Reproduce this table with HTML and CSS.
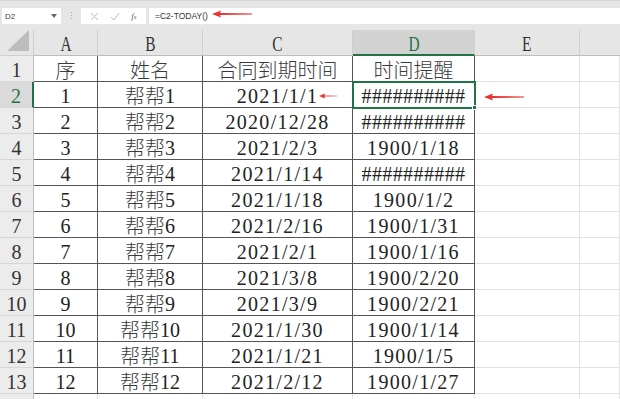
FILE: index.html
```html
<!DOCTYPE html>
<html lang="zh-CN">
<head>
<meta charset="utf-8">
<title>Sheet</title>
<link rel="stylesheet" href="styles.css">
</head>
<body>
<div class="app">
  <div class="toolbar">
    <div class="namebox"><span class="name">D2</span><svg class="dd" width="6" height="4" viewBox="0 0 6 4"><path d="M0 0h6L3 4z" fill="#666"/></svg></div>
    <div class="dots"><i></i><i></i><i></i></div>
    <div class="fxbox">
      <svg width="9" height="9" viewBox="0 0 9 9"><path d="M1 1l7 7M8 1l-7 7" stroke="#bbb" stroke-width="1" fill="none"/></svg>
      <svg width="10" height="9" viewBox="0 0 10 9"><path d="M1 5l3 3 5-7" stroke="#bbb" stroke-width="1" fill="none"/></svg>
      <span class="fx">f<small>x</small></span>
    </div>
    <div class="formula"><span class="ftext">=C2-TODAY()</span></div>
  </div>
  <div class="sheet">
    <div class="h corner"><svg width="24" height="22" viewBox="0 0 24 22"><path d="M22 0V21H0z" fill="#bdbdbd"/></svg></div>
    <div class="h col"><span class="hl">A</span></div>
    <div class="h col"><span class="hl">B</span></div>
    <div class="h col"><span class="hl">C</span></div>
    <div class="h col sel"><span class="hl">D</span></div>
    <div class="h col"><span class="hl">E</span></div>
    <div class="h col last"></div>

    <div class="h row">1</div><div class="c t cjc">序</div><div class="c t cjc">姓名</div><div class="c t cjc">合同到期时间</div><div class="c t cjc">时间提醒</div><div class="c g"></div><div class="c g"></div>
    <div class="h row rsel">2</div><div class="c t">1</div><div class="c t"><span class="cj">帮帮</span>1</div><div class="c t d">2021/1/1</div><div class="c t active hash">##########<span class="handle"></span></div><div class="c g"></div><div class="c g"></div>
    <div class="h row">3</div><div class="c t">2</div><div class="c t"><span class="cj">帮帮</span>2</div><div class="c t d">2020/12/28</div><div class="c t hash">##########</div><div class="c g"></div><div class="c g"></div>
    <div class="h row">4</div><div class="c t">3</div><div class="c t"><span class="cj">帮帮</span>3</div><div class="c t d">2021/2/3</div><div class="c t d">1900/1/18</div><div class="c g"></div><div class="c g"></div>
    <div class="h row">5</div><div class="c t">4</div><div class="c t"><span class="cj">帮帮</span>4</div><div class="c t d">2021/1/14</div><div class="c t hash">##########</div><div class="c g"></div><div class="c g"></div>
    <div class="h row">6</div><div class="c t">5</div><div class="c t"><span class="cj">帮帮</span>5</div><div class="c t d">2021/1/18</div><div class="c t d">1900/1/2</div><div class="c g"></div><div class="c g"></div>
    <div class="h row">7</div><div class="c t">6</div><div class="c t"><span class="cj">帮帮</span>6</div><div class="c t d">2021/2/16</div><div class="c t d">1900/1/31</div><div class="c g"></div><div class="c g"></div>
    <div class="h row">8</div><div class="c t">7</div><div class="c t"><span class="cj">帮帮</span>7</div><div class="c t d">2021/2/1</div><div class="c t d">1900/1/16</div><div class="c g"></div><div class="c g"></div>
    <div class="h row">9</div><div class="c t">8</div><div class="c t"><span class="cj">帮帮</span>8</div><div class="c t d">2021/3/8</div><div class="c t d">1900/2/20</div><div class="c g"></div><div class="c g"></div>
    <div class="h row">10</div><div class="c t">9</div><div class="c t"><span class="cj">帮帮</span>9</div><div class="c t d">2021/3/9</div><div class="c t d">1900/2/21</div><div class="c g"></div><div class="c g"></div>
    <div class="h row">11</div><div class="c t">10</div><div class="c t"><span class="cj">帮帮</span>10</div><div class="c t d">2021/1/30</div><div class="c t d">1900/1/14</div><div class="c g"></div><div class="c g"></div>
    <div class="h row">12</div><div class="c t">11</div><div class="c t"><span class="cj">帮帮</span>11</div><div class="c t d">2021/1/21</div><div class="c t d">1900/1/5</div><div class="c g"></div><div class="c g"></div>
    <div class="h row">13</div><div class="c t">12</div><div class="c t"><span class="cj">帮帮</span>12</div><div class="c t d">2021/2/12</div><div class="c t d">1900/1/27</div><div class="c g"></div><div class="c g"></div>
    <div class="h row"></div><div class="c g"></div><div class="c g"></div><div class="c g"></div><div class="c g"></div><div class="c g"></div><div class="c g"></div>
  </div>

  <svg class="arrow a1" width="40" height="8" viewBox="0 0 40 8"><path d="M0 4L9 0.5 8 3 40 3.6 40 4.4 8 5 9 7.5z" fill="#e8322d"/></svg>
  <svg class="arrow a2" width="18" height="6" viewBox="0 0 18 6"><path d="M0 3L6 0.5 5.5 2.4 18 2.7 18 3.3 5.5 3.6 6 5.5z" fill="#e8322d"/></svg>
  <svg class="arrow a3" width="40" height="8" viewBox="0 0 40 8"><path d="M0 4L9 0.5 8 3 40 3.6 40 4.4 8 5 9 7.5z" fill="#e8322d"/></svg>
</div>
</body>
</html>
```
FILE: styles.css
```css
* { box-sizing: border-box; }
html, body { margin: 0; padding: 0; }
body { width: 620px; height: 399px; overflow: hidden; background: #fff; }
.app { position: relative; width: 620px; height: 399px; overflow: hidden; }

.toolbar {
  height: 30px;
  background: #e6e6e6;
  display: flex;
  align-items: flex-start;
  padding: 7px 0 0 2px;
  border-top: 1px solid #d8d8d8;
}
.namebox {
  width: 59px; height: 16px; background: #fff;
  display: flex; align-items: center; justify-content: space-between;
  padding: 0 4px 0 3px;
}
.name { font: 8px "Liberation Sans", sans-serif; color: #444; }
.dots { width: 20px; display: flex; flex-direction: column; align-items: center; gap: 2px; padding-top: 4px; }
.dots i { width: 1px; height: 1px; background: #aaa; }
.fxbox {
  width: 65px; height: 16px; background: #fff;
  display: flex; align-items: center; justify-content: space-around;
  padding: 0 4px;
}
.fx { font: italic 9px "Liberation Serif", serif; color: #666; }
.fx small { font-size: 6px; }
.formula {
  flex: 1; height: 16px; background: #fff; margin-left: 3px;
  display: flex; align-items: center; padding-left: 6px;
}
.ftext { font: 8.5px "Liberation Sans", sans-serif; color: #333; }

.sheet {
  display: grid;
  grid-template-columns: 34px 64px 105px 150px 122px 105px 40px;
  grid-template-rows: 26px repeat(13, 26px) 10px;
}
.h {
  background: #e6e6e6;
  border-right: 1px solid #cfcfcf;
  border-bottom: 1px solid #cfcfcf;
  color: #333;
  display: flex; align-items: center; justify-content: center;
  font: 20px/1 "Liberation Serif", serif;
}
.corner { align-items: flex-end; justify-content: flex-end; padding: 0 2px 3px 0; }
.col { padding-top: 3px; border-bottom-color: #bdbdbd; }
.hl { display: inline-block; transform: scaleX(0.7); font-size: 22px; }
.col.sel { background: #d3d3d3; color: #217346; border-bottom: 2px solid #217346; }
.col.last { border-right: none; }
.row { background: #ececec; padding-top: 2px; border-right: 1px solid #bdbdbd; border-bottom-color: #d6d6d6; }
.row.rsel { background: #dadada; color: #217346; border-right: 2px solid #217346; }

.c {
  display: flex; align-items: center; justify-content: center;
  font: 20px/20px "Liberation Serif", "Noto Sans CJK SC", serif;
  color: #222;
  padding-top: 2px;
  white-space: nowrap;
}
.cjc {
  font-family: "Noto Sans CJK SC", sans-serif;
  font-weight: 300;
  color: #3a3a3a;
  padding-top: 3px;
}
.cj {
  font-family: "Noto Sans CJK SC", sans-serif;
  font-weight: 300;
  line-height: 20px;
  color: #3a3a3a;
}
.t { border-right: 1px solid #555; border-bottom: 1px solid #555; }
.g { border-right: 1px solid #e1e1e1; border-bottom: 1px solid #e1e1e1; }
.d { letter-spacing: 1.3px; }
.hash { letter-spacing: 0.4px; }
.active { position: relative; outline: 2px solid #217346; outline-offset: -1px; }
.handle { position: absolute; right: -3px; bottom: -3px; width: 5px; height: 5px; background: #217346; border: 1px solid #fff; }

.arrow { position: absolute; }
.a1 { left: 212px; top: 10px; }
.a2 { left: 319px; top: 93px; }
.a3 { left: 484px; top: 93px; }
```
